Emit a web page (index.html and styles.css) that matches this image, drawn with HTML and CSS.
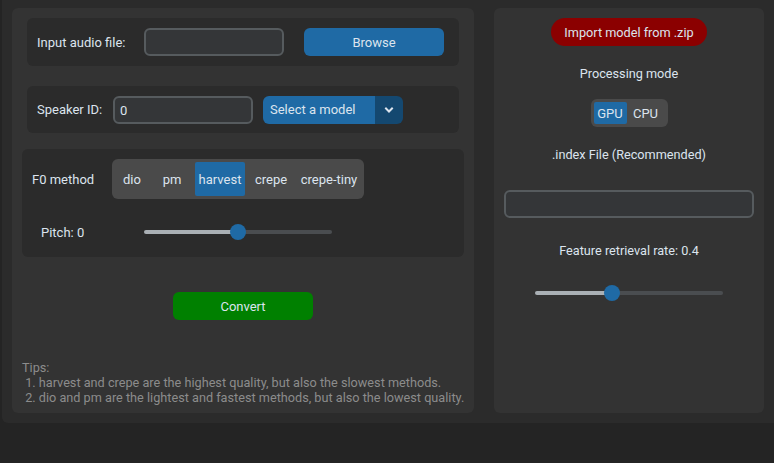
FILE: index.html
```html
<!DOCTYPE html>
<html>
<head>
<meta charset="utf-8">
<link rel="stylesheet" href="styles.css">
</head>
<body>
<div class="root">
  <div class="panel left">
    <div class="row row1">
      <span class="lbl w107">Input audio file:</span>
      <div class="entry"></div>
      <div class="btn blue browse">Browse</div>
    </div>
    <div class="row row2">
      <span class="lbl w76">Speaker ID:</span>
      <div class="entry"><span class="val">0</span></div>
      <div class="option">
        <span class="opt-text">Select a model</span>
        <span class="opt-arrow">
          <svg width="10" height="8" viewBox="0 0 10 8"><path d="M2 2.5 L5 5.5 L8 2.5" fill="none" stroke="#dce4ee" stroke-width="2" stroke-linecap="square"/></svg>
        </span>
      </div>
    </div>
    <div class="box f0">
      <div class="f0-top">
        <span class="lbl w80">F0 method</span>
        <div class="seg">
          <span class="segb" style="width:34px">dio</span>
          <span class="segb" style="width:46px">pm</span>
          <span class="segb sel" style="width:50px">harvest</span>
          <span class="segb" style="width:52px">crepe</span>
          <span class="segb" style="width:64px">crepe-tiny</span>
        </div>
      </div>
      <div class="pitch">
        <span class="lbl w103">Pitch: 0</span>
        <div class="slider">
          <div class="track" style="background:linear-gradient(to right,#aab0b5 0 50%,#4a4d50 50% 100%)"></div>
          <div class="knob" style="left:86px"></div>
        </div>
      </div>
    </div>
    <div class="btn green convert">Convert</div>
    <div class="tips">Tips:
 1. harvest and crepe are the highest quality, but also the slowest methods.
 2. dio and pm are the lightest and fastest methods, but also the lowest quality.</div>
  </div>
  <div class="panel right">
    <div class="btn red import">Import model from .zip</div>
    <div class="ctext pm">Processing mode</div>
    <div class="seg seg-small">
      <span class="segb sel" style="width:33px">GPU</span>
      <span class="segb" style="width:38px">CPU</span>
    </div>
    <div class="ctext idx">.index File (Recommended)</div>
    <div class="entry wide"></div>
    <div class="ctext frr">Feature retrieval rate: 0.4</div>
    <div class="slider rslider">
      <div class="track" style="background:linear-gradient(to right,#aab0b5 0 40%,#4a4d50 40% 100%)"></div>
      <div class="knob" style="left:69px"></div>
    </div>
  </div>
</div>
</body>
</html>
```
FILE: styles.css
```css
html, body {
  margin: 0;
  padding: 0;
  background: #242424;
  font-family: Roboto, "Liberation Sans", sans-serif;
  font-size: 13px;
  color: #dce4ee;
  overflow: hidden;
}
.root {
  margin-left: 2px;
  width: 772px;
  height: 423px;
  box-sizing: border-box;
  padding: 8px 10px 10px 10px;
  background: #2b2b2b;
  border-radius: 0 0 0 6px;
  display: flex;
  gap: 20px;
}
.panel {
  background: #333333;
  border-radius: 6px;
  height: 405px;
  display: flex;
  flex-direction: column;
}
.left { width: 462px; }
.right { width: 270px; align-items: center; padding-top: 10px; box-sizing: border-box; }

.row {
  background: #2b2b2b;
  border-radius: 6px;
  display: flex;
  align-items: center;
  padding-left: 10px;
  box-sizing: border-box;
}
.row1 { margin: 10px 15px 0; height: 48px; }
.row2 { margin: 20px 15px 0; height: 47px; align-items: flex-start; padding-top: 10px; }
.row2 .lbl { line-height: 28px; }
.lbl { flex: none; white-space: nowrap; }
.w107 { width: 107px; }
.w76 { width: 76px; }
.w80 { width: 80px; }
.w103 { width: 103px; }

.entry {
  width: 140px;
  height: 28px;
  box-sizing: border-box;
  background: #343638;
  border: 2px solid #565b5e;
  border-radius: 6px;
  display: flex;
  align-items: center;
  padding-left: 5px;
  flex: none;
}
.entry.wide { width: 250px; margin-top: 27px; }

.btn {
  width: 140px;
  height: 28px;
  border-radius: 6px;
  display: flex;
  align-items: center;
  justify-content: center;
  flex: none;
}
.blue { background: #1f6aa5; }
.green { background: #008000; }
.red { background: #8b0000; }
.browse { margin-left: 20px; }
.convert { align-self: center; margin-top: 35px; }
.import { width: 156px; border-radius: 14px; font-size: 12.7px; }

.option {
  margin-left: 10px;
  width: 140px;
  height: 28px;
  display: flex;
  border-radius: 6px;
  overflow: hidden;
  flex: none;
}
.opt-text {
  background: #1f6aa5;
  width: 112px;
  padding-left: 7px;
  box-sizing: border-box;
  line-height: 28px;
}
.opt-arrow {
  background: #144870;
  width: 28px;
  display: flex;
  align-items: center;
  justify-content: center;
}

.box {
  background: #2b2b2b;
  border-radius: 6px;
}
.f0 {
  margin: 16px 10px 0;
  padding: 10px 10px 16px;
  display: flex;
  flex-direction: column;
}
.f0-top { display: flex; align-items: center; }

.seg {
  display: flex;
  background: #4a4a4a;
  border-radius: 6px;
  padding: 3px;
  height: 40px;
  box-sizing: border-box;
}
.segb {
  display: flex;
  align-items: center;
  justify-content: center;
  border-radius: 2px;
  white-space: nowrap;
}
.segb.sel { background: #1f6aa5; }
.seg-small { height: 28px; margin-top: 17px; }

.pitch {
  display: flex;
  align-items: center;
  margin-top: 25px;
  padding-left: 9px;
  height: 17px;
}
.slider {
  position: relative;
  width: 188px;
  height: 17px;
  flex: none;
}
.track {
  position: absolute;
  left: 0;
  right: 0;
  top: 6px;
  height: 4px;
  border-radius: 2px;
}
.knob {
  position: absolute;
  top: 0;
  width: 16px;
  height: 16px;
  border-radius: 50%;
  background: #1f6aa5;
}
.rslider { margin-top: 26px; }

.tips {
  margin: 40px 0 0 10px;
  white-space: pre;
  line-height: 15px;
  font-size: 12.7px;
  color: #8c8c8c;
}

.ctext { line-height: 16px; text-align: center; font-size: 12.7px; }
.pm { margin-top: 20px; }
.idx { margin-top: 20px; }
.frr { margin-top: 25px; }
```
